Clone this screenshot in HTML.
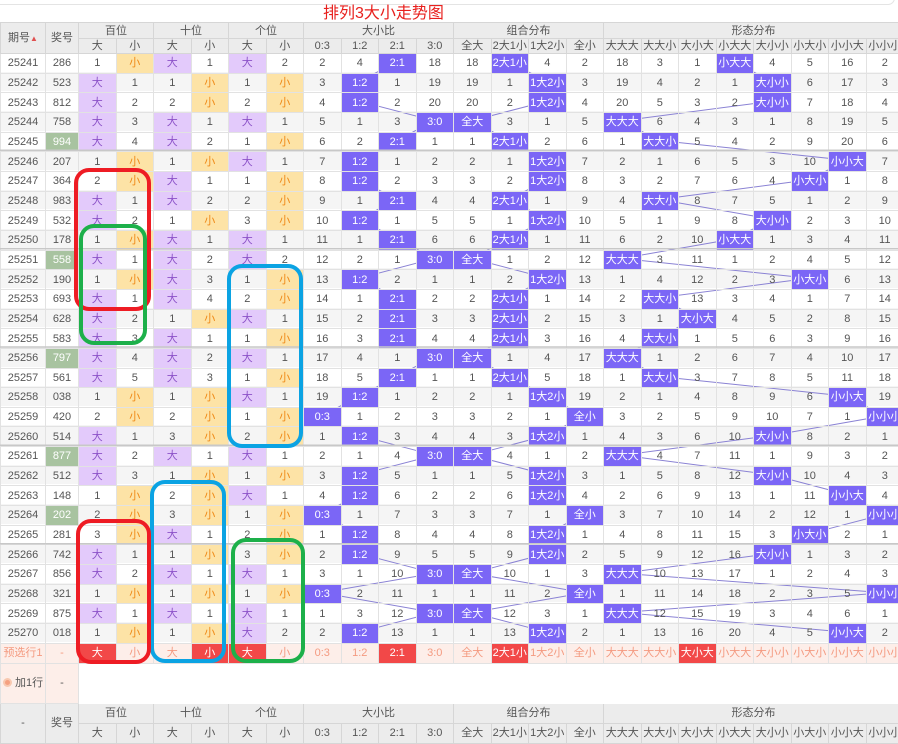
<!DOCTYPE html>
<html><head><meta charset="utf-8">
<style>
*{box-sizing:border-box}
body{margin:0;width:898px;height:741px;overflow:hidden;background:#fff;position:relative;font-family:"Liberation Sans","Noto Sans CJK SC",sans-serif;font-size:11px;color:#555}
#top{position:absolute;left:-10px;top:-12px;width:905px;height:17px;border:1px solid #e4e4e4;border-radius:7px}
#title{position:absolute;left:323px;top:4px;font-size:16px;color:#e8201d;line-height:20px;font-family:"Liberation Sans","Noto Sans CJK SC",sans-serif}
#stripes{position:absolute;left:0;top:52px;width:898px}
#stripes div{height:19.667px}
#stripes div:nth-child(even){background:#f5f5f5}
svg{position:absolute;left:0;top:0}
table{position:absolute;left:0;top:22px;width:903px;border-collapse:collapse;table-layout:fixed}
td{padding:0;text-align:center;border:1px solid #e2e2e2;white-space:nowrap;overflow:hidden;line-height:14px}
thead td{background:#ececec;border-color:#d6d6d6;color:#555}
tr.h1 td{height:16px}
tr.h2 td{height:14px}
tbody tr td{height:19.667px}
td.g{background:#a8c3a0;color:#fff}
td.b{background:#e3cafb;color:#8c52c8}
td.s{background:#fde3a6;color:#ef8a17}
td.h{background:#7b66f6;color:#fff}
tr.pre td{background:#fdeee9;color:#f49a80;height:20px}
tr.pre td.r{background:#f24848;color:#fff}
tr.add td{height:40px}
tr.add td.p{background:#fdeee9;color:#555}
tfoot td{background:#ececec;border-color:#d6d6d6}
tr.f1 td{height:20px}
tr.f2 td{height:20px}
</style></head><body>
<div id="top"></div>
<div id="title">排列3大小走势图</div>
<div id="stripes"><div></div><div></div><div></div><div></div><div></div><div></div><div></div><div></div><div></div><div></div><div></div><div></div><div></div><div></div><div></div><div></div><div></div><div></div><div></div><div></div><div></div><div></div><div></div><div></div><div></div><div></div><div></div><div></div><div></div><div></div></div>
<svg width="898" height="741" style="z-index:0"><g fill="none" stroke="#8a82d4" stroke-width="1">
<polyline points="396.75,61.8 359.25,81.5 359.25,101.2 434.25,120.8 396.75,140.5 359.25,160.2 359.25,179.8 396.75,199.5 359.25,219.2 396.75,238.8 434.25,258.5 359.25,278.2 396.75,297.8 396.75,317.5 396.75,337.2 434.25,356.8 396.75,376.5 359.25,396.2 321.75,415.8 359.25,435.5 434.25,455.2 359.25,474.8 359.25,494.5 321.75,514.2 359.25,533.8 359.25,553.5 434.25,573.2 321.75,592.8 434.25,612.5 359.25,632.2"/>
<polyline points="509.25,61.8 546.75,81.5 546.75,101.2 471.75,120.8 509.25,140.5 546.75,160.2 546.75,179.8 509.25,199.5 546.75,219.2 509.25,238.8 471.75,258.5 546.75,278.2 509.25,297.8 509.25,317.5 509.25,337.2 471.75,356.8 509.25,376.5 546.75,396.2 584.25,415.8 546.75,435.5 471.75,455.2 546.75,474.8 546.75,494.5 584.25,514.2 546.75,533.8 546.75,553.5 471.75,573.2 584.25,592.8 471.75,612.5 546.75,632.2"/>
<polyline points="734.25,61.8 771.75,81.5 771.75,101.2 621.75,120.8 659.25,140.5 846.75,160.2 809.25,179.8 659.25,199.5 771.75,219.2 734.25,238.8 621.75,258.5 809.25,278.2 659.25,297.8 696.75,317.5 659.25,337.2 621.75,356.8 659.25,376.5 846.75,396.2 884.25,415.8 771.75,435.5 621.75,455.2 771.75,474.8 846.75,494.5 884.25,514.2 809.25,533.8 771.75,553.5 621.75,573.2 884.25,592.8 621.75,612.5 846.75,632.2"/>
</g></svg>
<table>
<colgroup><col style="width:45px"><col style="width:33px"><col span="22" style="width:37.5px"></colgroup>
<thead>
<tr class="h1"><td rowspan="2">期号<span style="color:#e05050;font-size:8px">▲</span></td><td rowspan="2">奖号</td><td colspan="2">百位</td><td colspan="2">十位</td><td colspan="2">个位</td><td colspan="4">大小比</td><td colspan="4">组合分布</td><td colspan="8">形态分布</td></tr>
<tr class="h2"><td>大</td><td>小</td><td>大</td><td>小</td><td>大</td><td>小</td><td>0:3</td><td>1:2</td><td>2:1</td><td>3:0</td><td>全大</td><td>2大1小</td><td>1大2小</td><td>全小</td><td>大大大</td><td>大大小</td><td>大小大</td><td>小大大</td><td>大小小</td><td>小大小</td><td>小小大</td><td>小小小</td></tr>
</thead>
<tbody>
<tr><td>25241</td><td>286</td><td>1</td><td class="s">小</td><td class="b">大</td><td>1</td><td class="b">大</td><td>2</td><td>2</td><td>4</td><td class="h">2:1</td><td>18</td><td>18</td><td class="h">2大1小</td><td>4</td><td>2</td><td>18</td><td>3</td><td>1</td><td class="h">小大大</td><td>4</td><td>5</td><td>16</td><td>2</td></tr>
<tr><td>25242</td><td>523</td><td class="b">大</td><td>1</td><td>1</td><td class="s">小</td><td>1</td><td class="s">小</td><td>3</td><td class="h">1:2</td><td>1</td><td>19</td><td>19</td><td>1</td><td class="h">1大2小</td><td>3</td><td>19</td><td>4</td><td>2</td><td>1</td><td class="h">大小小</td><td>6</td><td>17</td><td>3</td></tr>
<tr><td>25243</td><td>812</td><td class="b">大</td><td>2</td><td>2</td><td class="s">小</td><td>2</td><td class="s">小</td><td>4</td><td class="h">1:2</td><td>2</td><td>20</td><td>20</td><td>2</td><td class="h">1大2小</td><td>4</td><td>20</td><td>5</td><td>3</td><td>2</td><td class="h">大小小</td><td>7</td><td>18</td><td>4</td></tr>
<tr><td>25244</td><td>758</td><td class="b">大</td><td>3</td><td class="b">大</td><td>1</td><td class="b">大</td><td>1</td><td>5</td><td>1</td><td>3</td><td class="h">3:0</td><td class="h">全大</td><td>3</td><td>1</td><td>5</td><td class="h">大大大</td><td>6</td><td>4</td><td>3</td><td>1</td><td>8</td><td>19</td><td>5</td></tr>
<tr><td>25245</td><td class="g">994</td><td class="b">大</td><td>4</td><td class="b">大</td><td>2</td><td>1</td><td class="s">小</td><td>6</td><td>2</td><td class="h">2:1</td><td>1</td><td>1</td><td class="h">2大1小</td><td>2</td><td>6</td><td>1</td><td class="h">大大小</td><td>5</td><td>4</td><td>2</td><td>9</td><td>20</td><td>6</td></tr>
<tr><td>25246</td><td>207</td><td>1</td><td class="s">小</td><td>1</td><td class="s">小</td><td class="b">大</td><td>1</td><td>7</td><td class="h">1:2</td><td>1</td><td>2</td><td>2</td><td>1</td><td class="h">1大2小</td><td>7</td><td>2</td><td>1</td><td>6</td><td>5</td><td>3</td><td>10</td><td class="h">小小大</td><td>7</td></tr>
<tr><td>25247</td><td>364</td><td>2</td><td class="s">小</td><td class="b">大</td><td>1</td><td>1</td><td class="s">小</td><td>8</td><td class="h">1:2</td><td>2</td><td>3</td><td>3</td><td>2</td><td class="h">1大2小</td><td>8</td><td>3</td><td>2</td><td>7</td><td>6</td><td>4</td><td class="h">小大小</td><td>1</td><td>8</td></tr>
<tr><td>25248</td><td>983</td><td class="b">大</td><td>1</td><td class="b">大</td><td>2</td><td>2</td><td class="s">小</td><td>9</td><td>1</td><td class="h">2:1</td><td>4</td><td>4</td><td class="h">2大1小</td><td>1</td><td>9</td><td>4</td><td class="h">大大小</td><td>8</td><td>7</td><td>5</td><td>1</td><td>2</td><td>9</td></tr>
<tr><td>25249</td><td>532</td><td class="b">大</td><td>2</td><td>1</td><td class="s">小</td><td>3</td><td class="s">小</td><td>10</td><td class="h">1:2</td><td>1</td><td>5</td><td>5</td><td>1</td><td class="h">1大2小</td><td>10</td><td>5</td><td>1</td><td>9</td><td>8</td><td class="h">大小小</td><td>2</td><td>3</td><td>10</td></tr>
<tr><td>25250</td><td>178</td><td>1</td><td class="s">小</td><td class="b">大</td><td>1</td><td class="b">大</td><td>1</td><td>11</td><td>1</td><td class="h">2:1</td><td>6</td><td>6</td><td class="h">2大1小</td><td>1</td><td>11</td><td>6</td><td>2</td><td>10</td><td class="h">小大大</td><td>1</td><td>3</td><td>4</td><td>11</td></tr>
<tr><td>25251</td><td class="g">558</td><td class="b">大</td><td>1</td><td class="b">大</td><td>2</td><td class="b">大</td><td>2</td><td>12</td><td>2</td><td>1</td><td class="h">3:0</td><td class="h">全大</td><td>1</td><td>2</td><td>12</td><td class="h">大大大</td><td>3</td><td>11</td><td>1</td><td>2</td><td>4</td><td>5</td><td>12</td></tr>
<tr><td>25252</td><td>190</td><td>1</td><td class="s">小</td><td class="b">大</td><td>3</td><td>1</td><td class="s">小</td><td>13</td><td class="h">1:2</td><td>2</td><td>1</td><td>1</td><td>2</td><td class="h">1大2小</td><td>13</td><td>1</td><td>4</td><td>12</td><td>2</td><td>3</td><td class="h">小大小</td><td>6</td><td>13</td></tr>
<tr><td>25253</td><td>693</td><td class="b">大</td><td>1</td><td class="b">大</td><td>4</td><td>2</td><td class="s">小</td><td>14</td><td>1</td><td class="h">2:1</td><td>2</td><td>2</td><td class="h">2大1小</td><td>1</td><td>14</td><td>2</td><td class="h">大大小</td><td>13</td><td>3</td><td>4</td><td>1</td><td>7</td><td>14</td></tr>
<tr><td>25254</td><td>628</td><td class="b">大</td><td>2</td><td>1</td><td class="s">小</td><td class="b">大</td><td>1</td><td>15</td><td>2</td><td class="h">2:1</td><td>3</td><td>3</td><td class="h">2大1小</td><td>2</td><td>15</td><td>3</td><td>1</td><td class="h">大小大</td><td>4</td><td>5</td><td>2</td><td>8</td><td>15</td></tr>
<tr><td>25255</td><td>583</td><td class="b">大</td><td>3</td><td class="b">大</td><td>1</td><td>1</td><td class="s">小</td><td>16</td><td>3</td><td class="h">2:1</td><td>4</td><td>4</td><td class="h">2大1小</td><td>3</td><td>16</td><td>4</td><td class="h">大大小</td><td>1</td><td>5</td><td>6</td><td>3</td><td>9</td><td>16</td></tr>
<tr><td>25256</td><td class="g">797</td><td class="b">大</td><td>4</td><td class="b">大</td><td>2</td><td class="b">大</td><td>1</td><td>17</td><td>4</td><td>1</td><td class="h">3:0</td><td class="h">全大</td><td>1</td><td>4</td><td>17</td><td class="h">大大大</td><td>1</td><td>2</td><td>6</td><td>7</td><td>4</td><td>10</td><td>17</td></tr>
<tr><td>25257</td><td>561</td><td class="b">大</td><td>5</td><td class="b">大</td><td>3</td><td>1</td><td class="s">小</td><td>18</td><td>5</td><td class="h">2:1</td><td>1</td><td>1</td><td class="h">2大1小</td><td>5</td><td>18</td><td>1</td><td class="h">大大小</td><td>3</td><td>7</td><td>8</td><td>5</td><td>11</td><td>18</td></tr>
<tr><td>25258</td><td>038</td><td>1</td><td class="s">小</td><td>1</td><td class="s">小</td><td class="b">大</td><td>1</td><td>19</td><td class="h">1:2</td><td>1</td><td>2</td><td>2</td><td>1</td><td class="h">1大2小</td><td>19</td><td>2</td><td>1</td><td>4</td><td>8</td><td>9</td><td>6</td><td class="h">小小大</td><td>19</td></tr>
<tr><td>25259</td><td>420</td><td>2</td><td class="s">小</td><td>2</td><td class="s">小</td><td>1</td><td class="s">小</td><td class="h">0:3</td><td>1</td><td>2</td><td>3</td><td>3</td><td>2</td><td>1</td><td class="h">全小</td><td>3</td><td>2</td><td>5</td><td>9</td><td>10</td><td>7</td><td>1</td><td class="h">小小小</td></tr>
<tr><td>25260</td><td>514</td><td class="b">大</td><td>1</td><td>3</td><td class="s">小</td><td>2</td><td class="s">小</td><td>1</td><td class="h">1:2</td><td>3</td><td>4</td><td>4</td><td>3</td><td class="h">1大2小</td><td>1</td><td>4</td><td>3</td><td>6</td><td>10</td><td class="h">大小小</td><td>8</td><td>2</td><td>1</td></tr>
<tr><td>25261</td><td class="g">877</td><td class="b">大</td><td>2</td><td class="b">大</td><td>1</td><td class="b">大</td><td>1</td><td>2</td><td>1</td><td>4</td><td class="h">3:0</td><td class="h">全大</td><td>4</td><td>1</td><td>2</td><td class="h">大大大</td><td>4</td><td>7</td><td>11</td><td>1</td><td>9</td><td>3</td><td>2</td></tr>
<tr><td>25262</td><td>512</td><td class="b">大</td><td>3</td><td>1</td><td class="s">小</td><td>1</td><td class="s">小</td><td>3</td><td class="h">1:2</td><td>5</td><td>1</td><td>1</td><td>5</td><td class="h">1大2小</td><td>3</td><td>1</td><td>5</td><td>8</td><td>12</td><td class="h">大小小</td><td>10</td><td>4</td><td>3</td></tr>
<tr><td>25263</td><td>148</td><td>1</td><td class="s">小</td><td>2</td><td class="s">小</td><td class="b">大</td><td>1</td><td>4</td><td class="h">1:2</td><td>6</td><td>2</td><td>2</td><td>6</td><td class="h">1大2小</td><td>4</td><td>2</td><td>6</td><td>9</td><td>13</td><td>1</td><td>11</td><td class="h">小小大</td><td>4</td></tr>
<tr><td>25264</td><td class="g">202</td><td>2</td><td class="s">小</td><td>3</td><td class="s">小</td><td>1</td><td class="s">小</td><td class="h">0:3</td><td>1</td><td>7</td><td>3</td><td>3</td><td>7</td><td>1</td><td class="h">全小</td><td>3</td><td>7</td><td>10</td><td>14</td><td>2</td><td>12</td><td>1</td><td class="h">小小小</td></tr>
<tr><td>25265</td><td>281</td><td>3</td><td class="s">小</td><td class="b">大</td><td>1</td><td>2</td><td class="s">小</td><td>1</td><td class="h">1:2</td><td>8</td><td>4</td><td>4</td><td>8</td><td class="h">1大2小</td><td>1</td><td>4</td><td>8</td><td>11</td><td>15</td><td>3</td><td class="h">小大小</td><td>2</td><td>1</td></tr>
<tr><td>25266</td><td>742</td><td class="b">大</td><td>1</td><td>1</td><td class="s">小</td><td>3</td><td class="s">小</td><td>2</td><td class="h">1:2</td><td>9</td><td>5</td><td>5</td><td>9</td><td class="h">1大2小</td><td>2</td><td>5</td><td>9</td><td>12</td><td>16</td><td class="h">大小小</td><td>1</td><td>3</td><td>2</td></tr>
<tr><td>25267</td><td>856</td><td class="b">大</td><td>2</td><td class="b">大</td><td>1</td><td class="b">大</td><td>1</td><td>3</td><td>1</td><td>10</td><td class="h">3:0</td><td class="h">全大</td><td>10</td><td>1</td><td>3</td><td class="h">大大大</td><td>10</td><td>13</td><td>17</td><td>1</td><td>2</td><td>4</td><td>3</td></tr>
<tr><td>25268</td><td>321</td><td>1</td><td class="s">小</td><td>1</td><td class="s">小</td><td>1</td><td class="s">小</td><td class="h">0:3</td><td>2</td><td>11</td><td>1</td><td>1</td><td>11</td><td>2</td><td class="h">全小</td><td>1</td><td>11</td><td>14</td><td>18</td><td>2</td><td>3</td><td>5</td><td class="h">小小小</td></tr>
<tr><td>25269</td><td>875</td><td class="b">大</td><td>1</td><td class="b">大</td><td>1</td><td class="b">大</td><td>1</td><td>1</td><td>3</td><td>12</td><td class="h">3:0</td><td class="h">全大</td><td>12</td><td>3</td><td>1</td><td class="h">大大大</td><td>12</td><td>15</td><td>19</td><td>3</td><td>4</td><td>6</td><td>1</td></tr>
<tr><td>25270</td><td>018</td><td>1</td><td class="s">小</td><td>1</td><td class="s">小</td><td class="b">大</td><td>2</td><td>2</td><td class="h">1:2</td><td>13</td><td>1</td><td>1</td><td>13</td><td class="h">1大2小</td><td>2</td><td>1</td><td>13</td><td>16</td><td>20</td><td>4</td><td>5</td><td class="h">小小大</td><td>2</td></tr>
<tr class="pre"><td>预选行1</td><td>-</td><td class="r">大</td><td>小</td><td>大</td><td class="r">小</td><td class="r">大</td><td>小</td><td>0:3</td><td>1:2</td><td class="r">2:1</td><td>3:0</td><td>全大</td><td class="r">2大1小</td><td>1大2小</td><td>全小</td><td>大大大</td><td>大大小</td><td class="r">大小大</td><td>小大大</td><td>大小小</td><td>小大小</td><td>小小大</td><td>小小小</td></tr>
<tr class="add"><td class="p"><span style="display:inline-block;width:9px;height:9px;border-radius:50%;background:#f5a080;border:2px solid #f8c8b0;vertical-align:-1px"></span> 加1行</td><td class="p">-</td><td colspan="22" style="border-color:#fff #e2e2e2"></td></tr>
</tbody>
<tfoot>
<tr class="f1"><td rowspan="2">-</td><td rowspan="2">奖号</td><td colspan="2">百位</td><td colspan="2">十位</td><td colspan="2">个位</td><td colspan="4">大小比</td><td colspan="4">组合分布</td><td colspan="8">形态分布</td></tr>
<tr class="f2"><td>大</td><td>小</td><td>大</td><td>小</td><td>大</td><td>小</td><td>0:3</td><td>1:2</td><td>2:1</td><td>3:0</td><td>全大</td><td>2大1小</td><td>1大2小</td><td>全小</td><td>大大大</td><td>大大小</td><td>大小大</td><td>小大大</td><td>大小小</td><td>小大小</td><td>小小大</td><td>小小小</td></tr>
</tfoot>
</table>
<svg width="898" height="741" style="z-index:2;pointer-events:none"><g stroke="#c8c8c8" stroke-width="1.5">
<line x1="0" y1="150.3" x2="898" y2="150.3"/><line x1="0" y1="248.7" x2="898" y2="248.7"/><line x1="0" y1="347" x2="898" y2="347"/><line x1="0" y1="445.3" x2="898" y2="445.3"/><line x1="0" y1="543.7" x2="898" y2="543.7"/>
</g><g fill="none" stroke-width="4">
<rect x="76" y="170" width="73" height="139" rx="13" stroke="#ee1c24"/>
<rect x="81" y="226" width="64" height="117" rx="13" stroke="#1db04a"/>
<rect x="229" y="266" width="72" height="180" rx="13" stroke="#0ba3e3"/>
<rect x="152" y="482" width="72" height="179" rx="13" stroke="#0ba3e3"/>
<rect x="78" y="521" width="71" height="141" rx="13" stroke="#ee1c24"/>
<rect x="233" y="540" width="70" height="121" rx="13" stroke="#1db04a"/>
</g></svg>
</body></html>
